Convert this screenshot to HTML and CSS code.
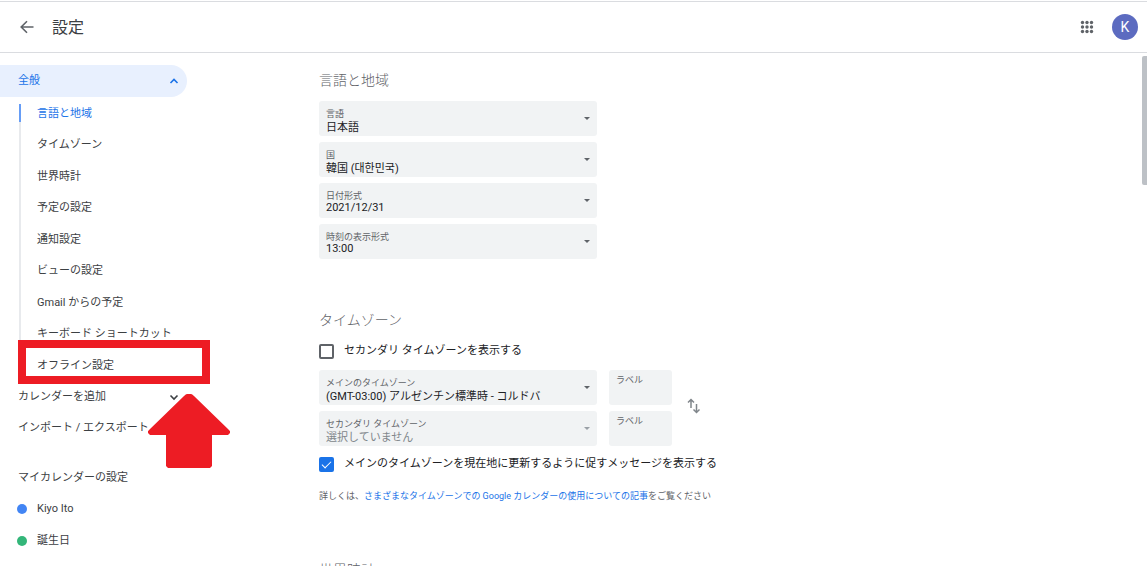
FILE: index.html
```html
<!DOCTYPE html>
<html lang="ja">
<head>
<meta charset="utf-8">
<meta name="viewport" content="width=device-width, initial-scale=1">
<title>設定</title>
<link rel="stylesheet" href="styles.css">
</head>
<body>
<header class="topbar">
  <button class="icon-button" type="button" aria-label="戻る">
    <svg width="14" height="14" viewBox="0 0 14 14" fill="none" stroke="#5f6368" stroke-width="1.6"><path d="M13.5 7H1.5M7 1.2L1.2 7L7 12.8"/></svg>
  </button>
  <h1 class="title">設定</h1>
  <button class="icon-button" type="button" aria-label="アプリ">
    <svg width="14" height="14" viewBox="0 0 14 14" fill="#5f6368"><circle cx="2.500" cy="2.500" r="1.7"/><circle cx="7" cy="2.500" r="1.7"/><circle cx="11.500" cy="2.500" r="1.7"/><circle cx="2.500" cy="7" r="1.7"/><circle cx="7" cy="7" r="1.7"/><circle cx="11.500" cy="7" r="1.7"/><circle cx="2.500" cy="11.500" r="1.7"/><circle cx="7" cy="11.500" r="1.7"/><circle cx="11.500" cy="11.500" r="1.7"/></svg>
  </button>
  <button class="avatar" type="button">K</button>
</header>
<div class="layout">
  <nav class="sidebar">
    <button class="group group-open" type="button">全般
      <svg width="10" height="10" viewBox="0 0 10 10" fill="none" stroke="#1a73e8" stroke-width="1.6"><path d="M1.5 7L5 3.5L8.5 7"/></svg>
    </button>
    <ul class="sections">
      <li><a class="current" href="#language">言語と地域</a></li>
      <li><a href="#timezone">タイムゾーン</a></li>
      <li><a href="#worldclock">世界時計</a></li>
      <li><a href="#events">予定の設定</a></li>
      <li><a href="#notifications">通知設定</a></li>
      <li><a href="#view">ビューの設定</a></li>
      <li><a href="#gmail">Gmail からの予定</a></li>
      <li><a href="#keyboard">キーボード ショートカット</a></li>
      <li class="marked"><a href="#offline">オフライン設定</a></li>
    </ul>
    <button class="group" type="button">カレンダーを追加
      <svg width="10" height="10" viewBox="0 0 10 10" fill="none" stroke="#3c4043" stroke-width="1.6"><path d="M1.5 3.5L5 7L8.5 3.5"/></svg>
    </button>
    <div class="import">
      <a class="group" href="#import">インポート / エクスポート</a>
      <svg class="pointer" width="82" height="74" viewBox="0 0 82 74" fill="#ed1c24"><path d="M39 0H43Q44 0 46 2L81 36Q83 38 82 39L80 41H64V72L62 74H20L18 72V41H2L0 39Q-1 38 1 36L36 2Q38 0 39 0Z"/></svg>
    </div>
    <h2 class="calendars-title">マイカレンダーの設定</h2>
    <ul class="calendars">
      <li><a href="#kiyo"><span class="dot dot-blue"></span>Kiyo Ito</a></li>
      <li><a href="#birthday"><span class="dot dot-green"></span>誕生日</a></li>
    </ul>
  </nav>
  <main class="content">
    <section class="panel" id="language">
      <h2>言語と地域</h2>
      <div class="fields">
        <div class="field"><label for="lang">言語</label><select id="lang"><option>日本語</option></select><svg class="caret" width="6" height="3" viewBox="0 0 6 3"><path d="M0 0H6L3 3Z"/></svg></div>
        <div class="field"><label for="country">国</label><select id="country"><option>韓国 (대한민국)</option></select><svg class="caret" width="6" height="3" viewBox="0 0 6 3"><path d="M0 0H6L3 3Z"/></svg></div>
        <div class="field latin"><label for="date">日付形式</label><select id="date"><option>2021/12/31</option></select><svg class="caret" width="6" height="3" viewBox="0 0 6 3"><path d="M0 0H6L3 3Z"/></svg></div>
        <div class="field latin"><label for="time">時刻の表示形式</label><select id="time"><option>13:00</option></select><svg class="caret" width="6" height="3" viewBox="0 0 6 3"><path d="M0 0H6L3 3Z"/></svg></div>
      </div>
    </section>
    <section class="panel" id="timezone">
      <h2>タイムゾーン</h2>
      <label class="check"><input type="checkbox">セカンダリ タイムゾーンを表示する</label>
      <div class="zones">
        <div class="fields">
          <div class="field"><label for="main-tz">メインのタイムゾーン</label><select id="main-tz"><option>(GMT-03:00) アルゼンチン標準時 - コルドバ</option></select><svg class="caret" width="6" height="3" viewBox="0 0 6 3"><path d="M0 0H6L3 3Z"/></svg></div>
          <div class="field off"><label for="sub-tz">セカンダリ タイムゾーン</label><select id="sub-tz" disabled><option>選択していません</option></select><svg class="caret" width="6" height="3" viewBox="0 0 6 3"><path d="M0 0H6L3 3Z"/></svg></div>
        </div>
        <div class="names">
          <div class="name"><label for="main-name">ラベル</label><input id="main-name" type="text"></div>
          <div class="name"><label for="sub-name">ラベル</label><input id="sub-name" type="text" disabled></div>
        </div>
        <button class="icon-button" type="button" aria-label="タイムゾーンを入れ替える">
          <svg width="14" height="16" viewBox="0 0 14 16" fill="none" stroke="#80868b" stroke-width="1.5"><path d="M4 10V1.5M1 4.5L4 1.5L7 4.5M9.500 6V14.500M6.500 11.500L9.500 14.500L12.500 11.500"/></svg>
        </button>
      </div>
      <label class="check"><input type="checkbox" checked>メインのタイムゾーンを現在地に更新するように促すメッセージを表示する</label>
      <p class="help">詳しくは、<a href="#help">さまざまなタイムゾーンでの Google カレンダーの使用についての記事</a>をご覧ください</p>
    </section>
    <section class="panel" id="worldclock">
      <h2>世界時計</h2>
    </section>
  </main>
  <div class="thumb"></div>
</div>
</body>
</html>
```
FILE: styles.css
```css
*, *::before, *::after { box-sizing: border-box; }

body {
  margin: 0;
  height: 100vh;
  overflow: hidden;
  display: flex;
  flex-direction: column;
  background: #fff;
  color: #3c4043;
  font: 11px/16px Roboto, "Noto Sans CJK JP", sans-serif;
}

button, select, input { font: inherit; color: inherit; margin: 0; }
button { border: 0; background: none; padding: 0; cursor: pointer; }
a { color: inherit; text-decoration: none; }
ul { list-style: none; margin: 0; padding: 0; }
h1, h2, p { margin: 0; font-weight: 400; }
svg { display: block; flex: none; }

.topbar {
  display: flex;
  align-items: center;
  flex: none;
  margin-top: 1px;
  padding: 12px 9px 12px 20px;
  border-top: 1px solid #dadce0;
  border-bottom: 1px solid #dadce0;
}
.title {
  flex: 1;
  margin-left: 18px;
  padding-top: 1px;
  font-size: 16px;
  line-height: 24px;
}
.avatar {
  width: 26px;
  height: 26px;
  margin-left: 18px;
  border-radius: 50%;
  background: #5c6bc0;
  color: #fff;
  font-size: 14px;
  line-height: 26px;
}

.layout {
  position: relative;
  display: flex;
  flex: 1;
  min-height: 0;
}

.sidebar {
  flex: none;
  width: 319px;
  padding-top: 12px;
}
.group {
  display: flex;
  align-items: center;
  justify-content: space-between;
  width: 187px;
  height: 31px;
  padding: 0 8px 0 18px;
}
.group-open {
  height: 32px;
  border-radius: 0 16px 16px 0;
  background: #e8f0fe;
  color: #1a73e8;
}
.sections {
  margin-left: 19px;
  padding-top: 1px;
}
.sections li {
  display: flex;
  align-items: center;
  height: 31px;
  border-left: 2px solid #e8eaed;
}
.sections li:nth-child(even) { height: 32px; }
.sections a { padding-left: 16px; }
.sections li:first-child {
  border-image: linear-gradient(#fff 7px, #669df6 7px, #669df6 23px, #e8eaed 23px) 1;
}
.current { color: #1a73e8; }

/* Callout frame around the offline entry */
.sections .marked {
  position: relative;
  border-color: transparent;
}
.marked::after {
  content: "";
  position: absolute;
  top: -10px;
  left: -3px;
  width: 192px;
  height: 44px;
  border: 8px solid #ed1c24;
  pointer-events: none;
}
.import { position: relative; }
.pointer {
  position: absolute;
  top: -18px;
  left: 148px;
}

.calendars-title {
  margin-top: 19px;
  padding-left: 18px;
  font-size: 11px;
  line-height: 31px;
}
.calendars a {
  display: flex;
  align-items: center;
  gap: 10px;
  height: 32px;
  padding-left: 17px;
}
.dot {
  width: 10px;
  height: 10px;
  border-radius: 50%;
}
.dot-blue { background: #4285f4; }
.dot-green { background: #33b679; }

.content {
  flex: 1;
  min-width: 0;
  padding-top: 17px;
}
.panel { margin-bottom: 51px; }
#timezone { margin-bottom: 56px; }
.panel h2 {
  margin-bottom: 11px;
  color: #5f6368;
  font-size: 14px;
  font-weight: 300;
  line-height: 20px;
}
.fields, .names {
  display: flex;
  flex-direction: column;
  gap: 6px;
}
.fields { width: 278px; }
.field, .name {
  display: grid;
  height: 35px;
  border-radius: 3px;
  background: #f1f3f4;
}
.field {
  grid-template: 19px 16px / 1fr 13px;
}
.field label, .name label {
  grid-area: 1 / 1;
  padding: 7px 0 0 7px;
  color: #5f6368;
  font-size: 9px;
  line-height: 12px;
}
.field select {
  grid-area: 1 / 1 / 3 / 3;
  appearance: none;
  border: 0;
  padding: 18px 0 0 7px;
  background: none;
  color: #202124;
  line-height: 16px;
}
.latin select { padding-top: 15px; }
.caret {
  grid-area: 1 / 2 / 3 / 3;
  align-self: center;
  fill: #5f6368;
  pointer-events: none;
}
.off select { color: #80868b; opacity: 1; }
.off .caret { fill: #9aa0a6; }

.name { grid-template: 17px 18px / 1fr; }
.name label { padding-top: 4px; }
.name input {
  width: 100%;
  border: 0;
  padding: 0 7px;
  background: none;
}
.names { width: 63px; }
.zones {
  display: flex;
  align-items: center;
  gap: 12px;
  margin: 9px 0 8px;
}
.zones .icon-button {
  margin-left: 3px;
  padding-bottom: 4px;
}

.check {
  display: flex;
  align-items: center;
  gap: 10px;
  color: #202124;
  line-height: 20px;
}
.check input {
  appearance: none;
  width: 15px;
  height: 15px;
  border: 2px solid #5f6368;
  border-radius: 2px;
}
.check input:checked {
  position: relative;
  border-color: #1a73e8;
  background: #1a73e8;
}
.check input:checked::after {
  content: "";
  position: absolute;
  top: 0;
  left: 3px;
  width: 5px;
  height: 9px;
  border: solid #fff;
  border-width: 0 1px 1px 0;
  transform: rotate(45deg);
}
.help {
  margin-top: 14px;
  color: #5f6368;
  font-size: 9px;
  line-height: 16px;
}
.help a { color: #1a73e8; }

.thumb {
  position: absolute;
  top: 3px;
  right: 0;
  width: 5px;
  height: 129px;
  border-radius: 2px 0 0 2px;
  background: #bdc1c6;
}
```
